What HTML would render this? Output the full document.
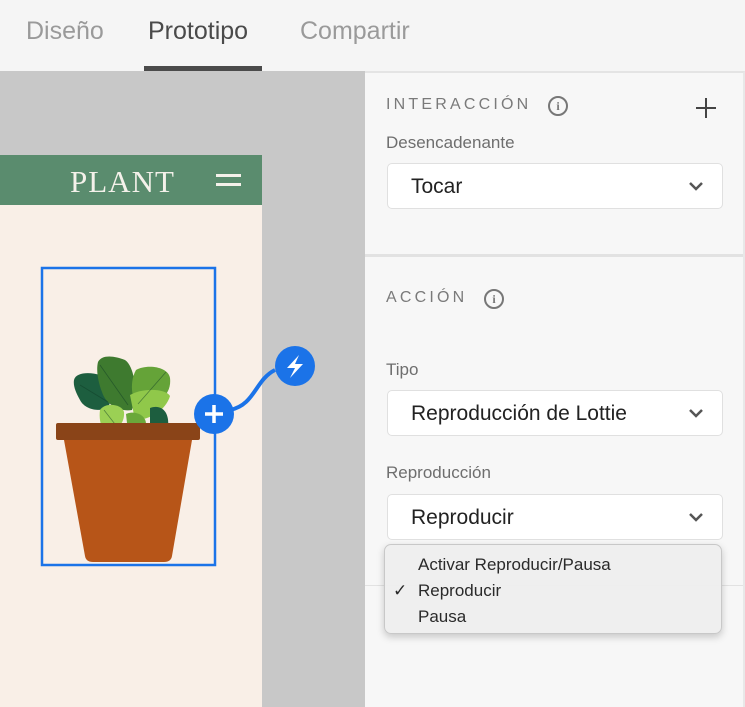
<!DOCTYPE html>
<html><head><meta charset="utf-8"><style>
*{margin:0;padding:0;box-sizing:border-box}
body{width:745px;height:707px;overflow:hidden;background:#f5f5f5;font-family:"Liberation Sans",sans-serif;position:relative}
.a{position:absolute}
.tab{position:absolute;top:17px;font-size:25px;color:#9a9a9a}
.lbl{position:absolute;font-size:17px;color:#6e6e6e}
.hd{position:absolute;font-size:16px;letter-spacing:3.2px;color:#7a7a7a}
.dd{position:absolute;left:387px;width:336px;height:46px;background:#fff;border:1px solid #e0e0e0;border-radius:5px;font-size:21px;color:#222;padding:11px 0 0 23px}
.dd svg{position:absolute;right:18px;top:17px}
.info{position:absolute;width:20px;height:20px;border:2px solid #777;border-radius:50%;font:bold 12px "Liberation Serif",serif;color:#777;text-align:center;line-height:16px}
</style></head><body>
<div class="tab" style="left:26px">Diseño</div>
<div class="tab" style="left:148px;color:#4a4a4a">Prototipo</div>
<div class="tab" style="left:300px">Compartir</div>
<div class="a" style="left:144px;top:66px;width:118px;height:5px;background:#4b4b4b"></div>
<div class="a" style="left:0;top:71px;width:365px;height:636px;background:#c8c8c8"></div>
<div class="a" style="left:365px;top:71px;width:380px;height:636px;background:#f7f7f7;border-top:2px solid #e4e4e4;border-right:2px solid #e8e8e8"></div>
<div class="a" style="left:365px;top:254px;width:378px;height:3px;background:#e2e2e2"></div>
<div class="a" style="left:365px;top:585px;width:378px;height:1px;background:#e2e2e2"></div>
<div class="a" style="left:0;top:155px;width:262px;height:552px;background:#f9efe7"></div>
<div class="a" style="left:0;top:155px;width:262px;height:50px;background:#5a8c6e"></div>
<div class="a" style="left:70px;top:164px;font:31px 'Liberation Serif',serif;color:#f4f1ea;letter-spacing:1px">PLANT</div>
<div class="a" style="left:216px;top:174px;width:25px;height:3px;background:#f4f1ea"></div>
<div class="a" style="left:216px;top:183px;width:25px;height:3px;background:#f4f1ea"></div>
<svg class="a" style="left:0;top:0" width="365" height="707">
<g stroke-width="0.8">
<path d="M74 380 C76 372 90 372 100 375 C110 378 114 395 108 408 C100 412 85 410 80 400 C76 393 73 386 74 380 Z" fill="#1d5e3f"/>
<path d="M98 362 C102 354 115 356 125 360 C134 366 138 390 132 410 C120 412 106 405 102 392 C98 382 96 370 98 362 Z" fill="#3e7a2f"/>
<path d="M136 370 C146 364 168 366 170 378 C172 395 158 405 140 408 C130 400 130 380 136 370 Z" fill="#65a338"/>
<path d="M130 395 C142 388 165 388 170 396 C166 410 150 420 135 420 Z" fill="#90c84a"/>
<path d="M100 410 C105 402 122 404 124 412 C125 424 116 432 104 431 C100 425 99 417 100 410 Z" fill="#9bd054"/>
<path d="M150 408 C160 404 170 410 168 428 L150 428 Z" fill="#1d5e3f"/>
<path d="M126 414 C135 410 146 415 146 424 L140 432 L128 432 Z" fill="#6aa83a"/>
<path d="M80 385 L108 402 M100 365 L128 405 M166 372 L138 404 M104 410 L118 428" stroke="#0f3b25" fill="none" opacity="0.5"/>
</g>
<path d="M64 440 L192 440 L172 556 Q171 562 164 562 L93 562 Q86 562 85 556 Z" fill="#b75518"/>
<rect x="56" y="423" width="144" height="17" rx="2" fill="#8a4418"/>
<rect x="42" y="268" width="173" height="297" fill="none" stroke="#1b73e8" stroke-width="2.5"/>
<path d="M230 410 C255 405 255 380 275 370" fill="none" stroke="#1b73e8" stroke-width="4"/>
<circle cx="214" cy="414" r="20" fill="#1b73e8"/>
<path d="M214 405v18M205 414h18" stroke="#fff" stroke-width="3.5"/>
<circle cx="295" cy="366" r="20" fill="#1b73e8"/>
<path d="M299 355 L287 368 L295 368 L290 378 L303 364 L295 364 Z" fill="#fff"/>
</svg>
<div class="hd" style="left:386px;top:96px">INTERACCIÓN</div>
<div class="info" style="left:548px;top:96px">i</div>
<svg class="a" style="left:695px;top:97px" width="22" height="22"><path d="M11 1v20M1 11h20" stroke="#444" stroke-width="2"/></svg>
<div class="lbl" style="left:386px;top:133px">Desencadenante</div>
<div class="dd" style="top:163px">Tocar<svg width="16" height="10"><path d="M2 2l6 6 6-6" fill="none" stroke="#555" stroke-width="2.5"/></svg></div>
<div class="hd" style="left:386px;top:289px">ACCIÓN</div>
<div class="info" style="left:484px;top:289px">i</div>
<div class="lbl" style="left:386px;top:360px">Tipo</div>
<div class="dd" style="top:390px">Reproducción de Lottie<svg width="16" height="10"><path d="M2 2l6 6 6-6" fill="none" stroke="#555" stroke-width="2.5"/></svg></div>
<div class="lbl" style="left:386px;top:463px">Reproducción</div>
<div class="dd" style="top:494px">Reproducir<svg width="16" height="10"><path d="M2 2l6 6 6-6" fill="none" stroke="#555" stroke-width="2.5"/></svg></div>
<div class="a" style="left:384px;top:544px;width:338px;height:90px;background:rgba(238,238,238,0.97);border:1px solid #c8c8c8;border-radius:7px;box-shadow:0 3px 8px rgba(0,0,0,0.2);font-size:17px;color:#2a2a2a">
<div class="a" style="left:33px;top:10px">Activar Reproducir/Pausa</div>
<div class="a" style="left:8px;top:36px">✓</div>
<div class="a" style="left:33px;top:36px">Reproducir</div>
<div class="a" style="left:33px;top:62px">Pausa</div>
</div>
</body></html>
